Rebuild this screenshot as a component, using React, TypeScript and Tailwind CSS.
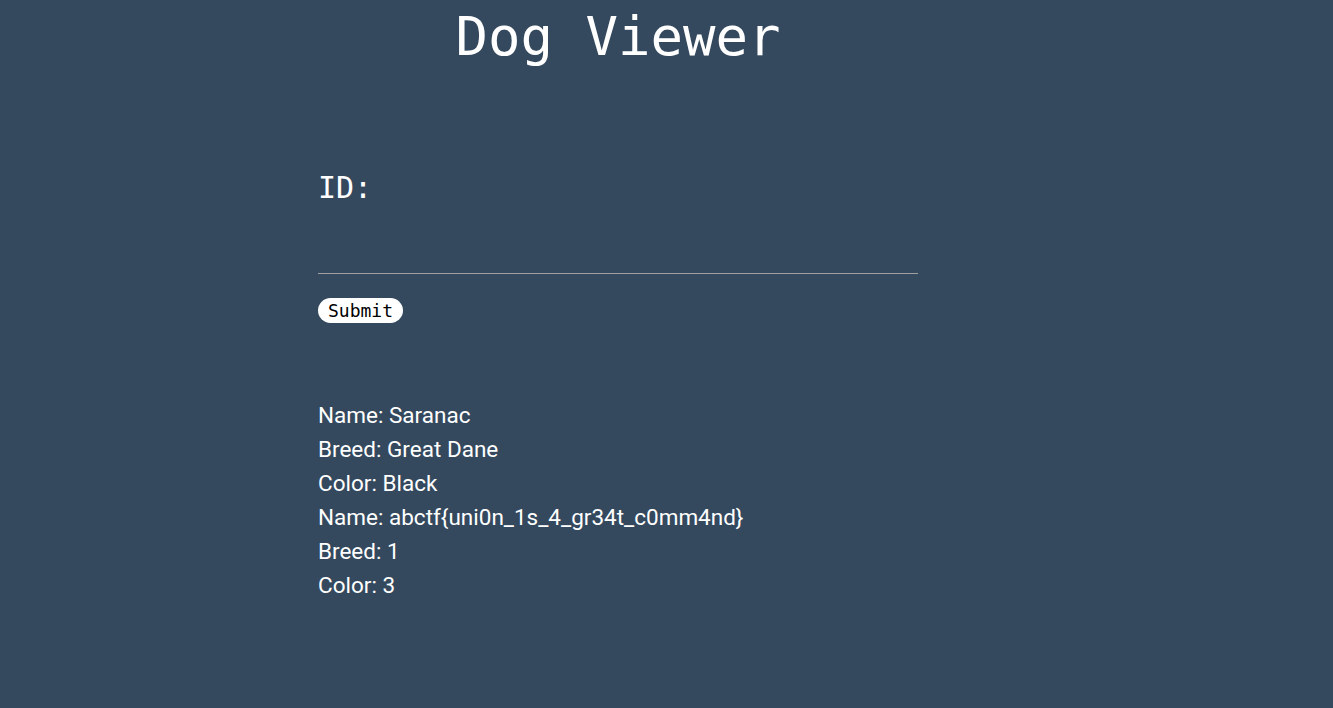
const dogs = [
  { name: "Saranac", breed: "Great Dane", color: "Black" },
  { name: "abctf{uni0n_1s_4_gr34t_c0mm4nd}", breed: "1", color: "3" },
];

export default function App() {
  return (
    <div className="min-h-screen w-full bg-[#34495e] text-white">
      <div className="ml-[318px] flex w-[600px] flex-col">
        <h1 className="pt-[6px] text-center font-['DejaVu_Sans_Mono',monospace] text-[54px] leading-[62px]">
          Dog Viewer
        </h1>
        <form className="mt-[101px] flex flex-col">
          <label className="font-['DejaVu_Sans_Mono',monospace] text-[30px] leading-[38px]">
            ID:
          </label>
          <input
            type="text"
            className="mt-[27px] h-[40px] w-full border-b border-[#a0a0a0] bg-transparent outline-none"
          />
          <div className="mt-[24px]">
            <button
              type="button"
              className="h-[25px] rounded-full bg-white px-[10px] font-['DejaVu_Sans_Mono',monospace] text-[18px] leading-[25px] text-black"
            >
              Submit
            </button>
          </div>
        </form>
        <div className="mt-[75px] flex flex-col font-['Roboto',sans-serif] text-[22.5px] leading-[34px]">
          {dogs.map((d) => (
            <div key={d.name}>
              <div>Name: {d.name}</div>
              <div>Breed: {d.breed}</div>
              <div>Color: {d.color}</div>
            </div>
          ))}
        </div>
      </div>
    </div>
  );
}
